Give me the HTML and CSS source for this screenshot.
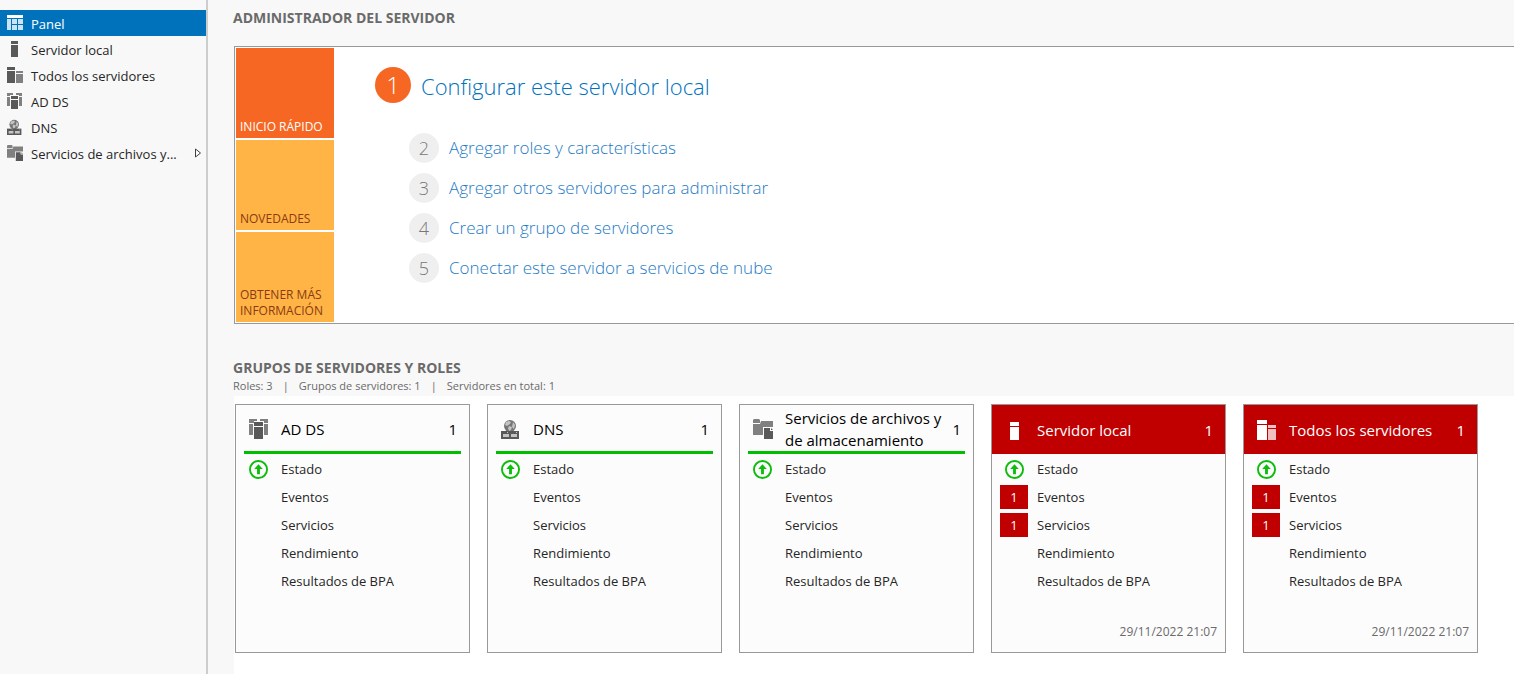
FILE: index.html
```
<!DOCTYPE html>
<html lang="es">
<head>
<meta charset="utf-8">
<title>Administrador del servidor</title>
<link rel="stylesheet" href="styles.css">
</head>
<body>
<svg class="sprite" aria-hidden="true">
  <symbol id="i-panel" viewBox="0 0 16 16"><path fill="#fff" d="M0 0h16v3H0z"/><path fill="#cce3f3" d="M0 4h4v11H0zM5 4h5v5H5zM11 4h5v5h-5zM5 10h5v5H5zM11 10h5v5h-5z"/></symbol>
  <symbol id="s-server" viewBox="0 0 16 16"><path fill="var(--dark)" d="M4 0h7v3H4zM4 4h7v12H4z"/></symbol>
  <symbol id="s-servers" viewBox="0 0 16 16"><path fill="var(--dark)" d="M0 0h8v3H0zM0 4h8v12H0z"/><path fill="var(--light)" d="M9 4h7v2H9zM9 7h7v9H9z"/></symbol>
  <symbol id="s-adds" viewBox="0 0 16 16"><path fill="var(--light)" d="M0 0h6v2H3v1H0zM9 0h6v3h-3V2H9zM0 4h3v9H0zM12 4h3v9h-3z"/><path fill="var(--dark)" d="M4 3h7v3H4zM4 7h7v9H4z"/></symbol>
  <symbol id="i-server" viewBox="0 0 20 20"><path fill="var(--dark)" d="M5 2h9v4H5zM5 7h9v13H5z"/></symbol>
  <symbol id="i-servers" viewBox="0 0 20 20"><path fill="var(--dark)" d="M0 0h10v4H0zM0 5h10v15H0z"/><path fill="var(--light)" d="M11 5h8v3h-8zM11 9h8v11h-8z"/></symbol>
  <symbol id="i-adds" viewBox="0 0 20 20"><path fill="var(--light)" d="M0 0h8v2H5v2H0zM11 0h8v4h-4V2h-4zM0 5h4v11H0zM15 5h4v11h-4z"/><path fill="var(--dark)" d="M5 3h9v4H5zM5 8h9v12H5z"/></symbol>
  <symbol id="i-dns" viewBox="0 0 20 20"><circle cx="9" cy="7" r="6" fill="#767676"/><path fill="#c4c4c4" d="M5 3l3-1 2 1-1 2-3 2-2-1zM8 7l3 1-1 3-2 1-1-3zM12 3l2 3-1 4-2-2z"/><path fill="var(--dark)" d="M0 12h18v8H0z"/><path fill="#c4c4c4" d="M2 15h6v3H2zM10 15h6v3h-6zM6 13h1v1H6zM15 13h1v1h-1z"/></symbol>
  <symbol id="i-files" viewBox="0 0 20 20"><path fill="var(--light)" d="M0 1l1-1h5l1 1v3H0zM0 5h7l1-3h12v6H10v8H0z"/><path fill="var(--dark)" d="M11 9h6v3h3v8h-9zM18 9l2 2h-2z"/></symbol>
  <symbol id="i-ok" viewBox="0 0 20 20"><circle cx="10" cy="10" r="9" fill="none" stroke="#0cbd0c" stroke-width="2"/><path fill="#0cbd0c" d="M10 4.500l4.500 5H11.500V15h-3V9.500H5.500z"/></symbol>
</svg>

<div class="app">
  <nav class="sidebar" aria-label="Navegación">
    <a class="nav-item active" href="#" aria-current="page"><svg class="nav-icon"><use href="#i-panel"/></svg><span class="nav-label">Panel</span></a>
    <a class="nav-item" href="#"><svg class="nav-icon"><use href="#s-server"/></svg><span class="nav-label">Servidor local</span></a>
    <a class="nav-item" href="#"><svg class="nav-icon"><use href="#s-servers"/></svg><span class="nav-label">Todos los servidores</span></a>
    <a class="nav-item" href="#"><svg class="nav-icon"><use href="#s-adds"/></svg><span class="nav-label">AD DS</span></a>
    <a class="nav-item" href="#"><svg class="nav-icon"><use href="#i-dns"/></svg><span class="nav-label">DNS</span></a>
    <a class="nav-item" href="#"><svg class="nav-icon"><use href="#i-files"/></svg><span class="nav-label">Servicios de archivos y...</span><svg class="chevron" viewBox="0 0 8 10"><path fill="#fff" stroke="#404040" d="M1.500 1v8l5-4z"/></svg></a>
  </nav>

  <main class="content">
    <h1 class="section-title">ADMINISTRADOR DEL SERVIDOR</h1>

    <section class="welcome">
      <div class="tiles">
        <button class="tile selected" type="button">INICIO RÁPIDO</button>
        <button class="tile" type="button">NOVEDADES</button>
        <button class="tile" type="button">OBTENER MÁS INFORMACIÓN</button>
      </div>
      <div class="steps">
        <a class="step primary" href="#"><span class="number">1</span><span class="step-label">Configurar este servidor local</span></a>
        <a class="step" href="#"><span class="number">2</span><span>Agregar roles y características</span></a>
        <a class="step" href="#"><span class="number">3</span><span>Agregar otros servidores para administrar</span></a>
        <a class="step" href="#"><span class="number">4</span><span>Crear un grupo de servidores</span></a>
        <a class="step" href="#"><span class="number">5</span><span>Conectar este servidor a servicios de nube</span></a>
      </div>
    </section>

    <h2 class="section-title">GRUPOS DE SERVIDORES Y ROLES</h2>
    <p class="stats"><span>Roles: 3</span><span>|</span><span>Grupos de servidores: 1</span><span>|</span><span>Servidores en total: 1</span></p>

    <section class="cards">
      <article class="card">
        <header class="card-head"><svg class="head-icon"><use href="#i-adds"/></svg><h3 class="card-title">AD DS</h3><span class="count">1</span></header>
        <ul class="rows">
          <li class="row"><span class="slot"><svg class="ok"><use href="#i-ok"/></svg></span><a href="#">Estado</a></li>
          <li class="row"><span class="slot"></span><a href="#">Eventos</a></li>
          <li class="row"><span class="slot"></span><a href="#">Servicios</a></li>
          <li class="row"><span class="slot"></span><a href="#">Rendimiento</a></li>
          <li class="row"><span class="slot"></span><a href="#">Resultados de BPA</a></li>
        </ul>
      </article>
      <article class="card">
        <header class="card-head"><svg class="head-icon"><use href="#i-dns"/></svg><h3 class="card-title">DNS</h3><span class="count">1</span></header>
        <ul class="rows">
          <li class="row"><span class="slot"><svg class="ok"><use href="#i-ok"/></svg></span><a href="#">Estado</a></li>
          <li class="row"><span class="slot"></span><a href="#">Eventos</a></li>
          <li class="row"><span class="slot"></span><a href="#">Servicios</a></li>
          <li class="row"><span class="slot"></span><a href="#">Rendimiento</a></li>
          <li class="row"><span class="slot"></span><a href="#">Resultados de BPA</a></li>
        </ul>
      </article>
      <article class="card">
        <header class="card-head"><svg class="head-icon"><use href="#i-files"/></svg><h3 class="card-title">Servicios de archivos y<br>de almacenamiento</h3><span class="count">1</span></header>
        <ul class="rows">
          <li class="row"><span class="slot"><svg class="ok"><use href="#i-ok"/></svg></span><a href="#">Estado</a></li>
          <li class="row"><span class="slot"></span><a href="#">Eventos</a></li>
          <li class="row"><span class="slot"></span><a href="#">Servicios</a></li>
          <li class="row"><span class="slot"></span><a href="#">Rendimiento</a></li>
          <li class="row"><span class="slot"></span><a href="#">Resultados de BPA</a></li>
        </ul>
      </article>
      <article class="card alert">
        <header class="card-head"><svg class="head-icon"><use href="#i-server"/></svg><h3 class="card-title">Servidor local</h3><span class="count">1</span></header>
        <ul class="rows">
          <li class="row"><span class="slot"><svg class="ok"><use href="#i-ok"/></svg></span><a href="#">Estado</a></li>
          <li class="row"><span class="slot badge">1</span><a href="#">Eventos</a></li>
          <li class="row"><span class="slot badge">1</span><a href="#">Servicios</a></li>
          <li class="row"><span class="slot"></span><a href="#">Rendimiento</a></li>
          <li class="row"><span class="slot"></span><a href="#">Resultados de BPA</a></li>
        </ul>
        <time class="stamp">29/11/2022 21:07</time>
      </article>
      <article class="card alert">
        <header class="card-head"><svg class="head-icon"><use href="#i-servers"/></svg><h3 class="card-title">Todos los servidores</h3><span class="count">1</span></header>
        <ul class="rows">
          <li class="row"><span class="slot"><svg class="ok"><use href="#i-ok"/></svg></span><a href="#">Estado</a></li>
          <li class="row"><span class="slot badge">1</span><a href="#">Eventos</a></li>
          <li class="row"><span class="slot badge">1</span><a href="#">Servicios</a></li>
          <li class="row"><span class="slot"></span><a href="#">Rendimiento</a></li>
          <li class="row"><span class="slot"></span><a href="#">Resultados de BPA</a></li>
        </ul>
        <time class="stamp">29/11/2022 21:07</time>
      </article>
    </section>
  </main>
</div>
</body>
</html>
```
FILE: styles.css
```
:root {
  --dark: #595959;
  --light: #808080;
}

* { box-sizing: border-box; }

body {
  margin: 0;
  background: #f8f8f8;
  color: #262626;
  font: 13px/20px "Open Sans", "Noto Sans", sans-serif;
}

h1, h2, h3, p, ul { margin: 0; padding: 0; }
ul { list-style: none; }
a { color: inherit; text-decoration: none; }

.sprite { position: absolute; width: 0; height: 0; }

.app { display: flex; min-height: 100vh; }

/* Sidebar */
.sidebar {
  flex: none;
  width: 208px;
  padding-top: 10px;
  border-right: 2px solid #cdcdcd;
}
.nav-item {
  display: flex;
  align-items: center;
  gap: 8px;
  height: 26px;
  padding: 0 4px 0 7px;
  white-space: nowrap;
}
.nav-item.active { background: #0072bc; color: #fff; }
.nav-icon { flex: none; width: 16px; height: 16px; }
.nav-label { padding-top: 2px; }
.chevron { width: 8px; height: 10px; margin-left: auto; }

/* Main area */
.content {
  flex: 1;
  min-width: 0;
  display: flex;
  flex-direction: column;
  padding: 8px 0 0 26px;
}
.section-title {
  font-size: 14px;
  font-weight: 700;
  line-height: 20px;
  color: #6a6a6a;
  margin-left: -1px;
}

.welcome {
  display: flex;
  margin: 18px 0 34px;
  padding: 1px;
  border: 1px solid #999;
  border-right: 0;
  background: #fff;
}
.tiles { display: grid; gap: 2px; width: 98px; }
.tile {
  display: flex;
  align-items: flex-end;
  height: 90px;
  padding: 4px 4px 3px;
  border: 0;
  background: #ffb445;
  color: #8b3a12;
  font: 12px/16px "Open Sans", "Noto Sans", sans-serif;
  text-align: left;
}
.tile.selected { background: #f56723; color: #fff; }

.steps { padding: 19px 0 0 41px; }
.step {
  display: flex;
  align-items: center;
  gap: 10px;
  height: 30px;
  margin: 0 0 10px 34px;
  color: #1e7bc4;
  font-size: 17px;
  font-weight: 300;
}
.step.primary {
  height: 36px;
  margin: 0 0 30px;
  font-size: 22px;
  color: #0072bc;
}
.step-label { padding-top: 2px; }
.number {
  display: grid;
  place-items: center;
  width: 30px;
  height: 30px;
  border-radius: 50%;
  background: #efefef;
  color: #777;
  font-size: 18px;
}
.primary .number {
  width: 36px;
  height: 36px;
  background: #f56723;
  color: #fff;
  font-size: 24px;
}

.stats {
  display: flex;
  gap: 10px;
  margin-left: -1px;
  padding-bottom: 2px;
  font-size: 11px;
  line-height: 16px;
  color: #6a6a6a;
}

/* Role and group cards */
.cards {
  flex: 1;
  display: flex;
  flex-wrap: wrap;
  align-content: flex-start;
  gap: 17px;
  padding: 8px 1px 21px;
  background: #fff;
}
.card {
  display: flex;
  flex-direction: column;
  width: 235px;
  min-height: 249px;
  border: 1px solid #999;
  background: #fcfcfc;
}
.card-head {
  display: flex;
  align-items: center;
  min-height: 49px;
  margin: 0 8px;
  padding: 2px 4px 0 5px;
  border-bottom: 3px solid #00be00;
  color: #000;
  font-size: 15px;
}
.head-icon { flex: none; width: 20px; height: 20px; margin-right: 12px; }
.card-title { flex: 1; font: inherit; line-height: 22px; white-space: nowrap; }
.rows { padding-top: 1px; }
.row { display: flex; align-items: center; gap: 9px; height: 28px; padding-left: 8px; }
.slot { display: grid; place-items: center; width: 28px; height: 24px; }
.ok { width: 19px; height: 19px; }
.badge { background: #c00000; color: #fff; }
.stamp {
  margin: auto 8px 10px auto;
  color: #6a6a6a;
  font-size: 12px;
  line-height: 20px;
}
.alert .card-head {
  margin: 0;
  padding: 0 12px 0 13px;
  border: 0;
  background: #c00000;
  color: #fff;
}
.alert .head-icon { --dark: #fff; --light: #f0bfbf; }
```
